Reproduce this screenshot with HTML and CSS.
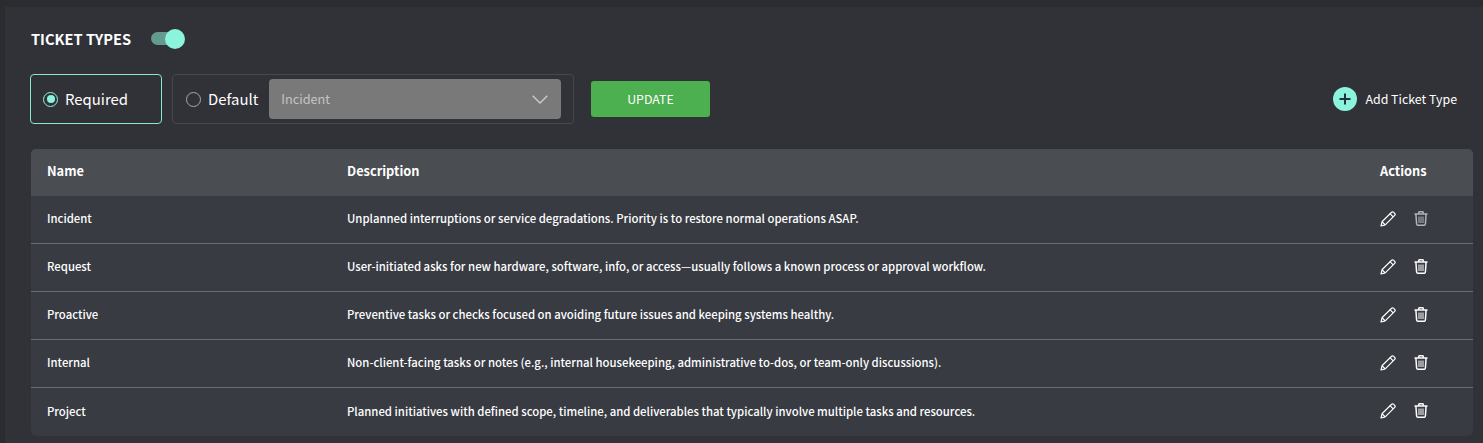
FILE: index.html
```html
<!DOCTYPE html>
<html lang="en">
<head>
<meta charset="utf-8">
<title>Ticket Types</title>
<link rel="stylesheet" href="styles.css">
</head>
<body>
<main class="card">
  <div class="title-row">
    <h2 class="title">TICKET TYPES</h2>
    <span class="switch"><span class="switch-knob"></span></span>
  </div>
  <div class="controls">
    <label class="option option-required">
      <span class="radio radio-on"><span class="radio-dot"></span></span>
      <span class="option-text">Required</span>
    </label>
    <div class="option option-default">
      <span class="radio"></span>
      <span class="option-text">Default</span>
      <div class="select">
        <span class="select-text">Incident</span>
        <svg class="chevron" width="16" height="9" viewBox="0 0 16 9"><path d="M0.7 0.7L8 8L15.3 0.7" fill="none" stroke="#c9cdd0" stroke-width="1.3"/></svg>
      </div>
    </div>
    <button class="update">UPDATE</button>
    <div class="add">
      <span class="add-icon"><svg width="12" height="12" viewBox="0 0 12 12"><path d="M6 0.5V11.5M0.5 6H11.5" stroke="#24303a" stroke-width="2"/></svg></span>
      <span>Add Ticket Type</span>
    </div>
  </div>
  <div class="table">
    <div class="row head">
      <div class="c-name">Name</div><div class="c-desc">Description</div><div class="c-act">Actions</div>
    </div>
    <div class="row">
      <div class="c-name">Incident</div>
      <div class="c-desc">Unplanned interruptions or service degradations. Priority is to restore normal operations ASAP.</div>
      <div class="c-act icons">
        <svg class="icon" width="16" height="16" viewBox="0 0 16 16"><use href="#pen"/></svg>
        <svg class="icon dim" width="14" height="15" viewBox="0 0 14 15"><use href="#bin"/></svg>
      </div>
    </div>
    <div class="row">
      <div class="c-name">Request</div>
      <div class="c-desc">User-initiated asks for new hardware, software, info, or access—usually follows a known process or approval workflow.</div>
      <div class="c-act icons">
        <svg class="icon" width="16" height="16" viewBox="0 0 16 16"><use href="#pen"/></svg>
        <svg class="icon" width="14" height="15" viewBox="0 0 14 15"><use href="#bin"/></svg>
      </div>
    </div>
    <div class="row">
      <div class="c-name">Proactive</div>
      <div class="c-desc">Preventive tasks or checks focused on avoiding future issues and keeping systems healthy.</div>
      <div class="c-act icons">
        <svg class="icon" width="16" height="16" viewBox="0 0 16 16"><use href="#pen"/></svg>
        <svg class="icon" width="14" height="15" viewBox="0 0 14 15"><use href="#bin"/></svg>
      </div>
    </div>
    <div class="row">
      <div class="c-name">Internal</div>
      <div class="c-desc">Non-client-facing tasks or notes (e.g., internal housekeeping, administrative to-dos, or team-only discussions).</div>
      <div class="c-act icons">
        <svg class="icon" width="16" height="16" viewBox="0 0 16 16"><use href="#pen"/></svg>
        <svg class="icon" width="14" height="15" viewBox="0 0 14 15"><use href="#bin"/></svg>
      </div>
    </div>
    <div class="row">
      <div class="c-name">Project</div>
      <div class="c-desc">Planned initiatives with defined scope, timeline, and deliverables that typically involve multiple tasks and resources.</div>
      <div class="c-act icons">
        <svg class="icon" width="16" height="16" viewBox="0 0 16 16"><use href="#pen"/></svg>
        <svg class="icon" width="14" height="15" viewBox="0 0 14 15"><use href="#bin"/></svg>
      </div>
    </div>
  </div>
</main>
<svg class="defs" width="0" height="0">
  <defs>
    <g id="pen" fill="none" stroke="currentColor" stroke-width="1.2" stroke-linejoin="round">
      <path d="M1 15L2 10.8L11.6 1.3C12.2 0.7 13.1 0.7 13.7 1.3L14.7 2.3C15.3 2.9 15.3 3.8 14.7 4.4L5.2 13.9Z"/>
      <path d="M10.2 2.8L13.2 5.8M2 10.8L5.2 13.9"/>
    </g>
    <g id="bin" fill="none" stroke="currentColor" stroke-width="1.5">
      <path d="M0.5 3H13.5" stroke-width="1.6"/>
      <path d="M4.7 2.8V1.7C4.7 1.1 5.1 0.7 5.7 0.7H8.3C8.9 0.7 9.3 1.1 9.3 1.7V2.8"/>
      <path d="M1.9 3L2.6 13C2.7 13.8 3.2 14.3 4 14.3H10C10.8 14.3 11.3 13.8 11.4 13L12.1 3"/>
      <path d="M5 5.5V12M7 5.5V12M9 5.5V12" stroke-width="1"/>
    </g>
  </defs>
</svg>
</body>
</html>
```

FILE: styles.css
```css
* { box-sizing: border-box; }
html, body { margin: 0; height: 100%; }
body {
  background: #2b2c30;
  color: #fff;
  font-family: "Noto Sans CJK SC", "Noto Sans", sans-serif;
  overflow: hidden;
  padding: 7px 0 0 5px;
}
.card {
  background: #313237;
  height: 436px;
  padding: 18px 10px 0 26px;
}
.title-row { display: flex; align-items: center; height: 28px; gap: 20px; }
.title { margin: 0; font-size: 14.6px; font-weight: 700; line-height: 28px; }
.switch {
  position: relative;
  display: block;
  width: 30px;
  height: 13px;
  border-radius: 7px;
  background: #639b8e;
  margin-top: -1px;
}
.switch-knob {
  position: absolute;
  right: -4px;
  top: -3px;
  width: 20px;
  height: 20px;
  border-radius: 50%;
  background: #8cf3dc;
}
.controls { display: flex; align-items: center; margin-top: 21px; height: 50px; }
.option {
  display: flex;
  align-items: center;
  height: 50px;
  border-radius: 4px;
  border: 1px solid #46484d;
  font-size: 14.9px;
}
.option-text { padding-bottom: 2px; }
.option-required { width: 132px; margin-left: -1px; padding-left: 12px; border-color: #86e8d2; }
.option-default { width: 402px; margin-left: 10px; padding-left: 13px; }
.radio {
  flex: none;
  width: 15px;
  height: 15px;
  border-radius: 50%;
  border: 1.5px solid #a8a9ab;
  margin-right: 7px;
  display: flex;
  align-items: center;
  justify-content: center;
}
.radio-on { border-color: #8cf3dc; }
.radio-dot { width: 8px; height: 8px; border-radius: 50%; background: #8cf3dc; }
.select {
  display: flex;
  align-items: center;
  justify-content: space-between;
  width: 292px;
  height: 40px;
  margin-left: 11px;
  padding: 0 13px 0 12px;
  background: #797979;
  border-radius: 4px;
  color: #c3c4c5;
  font-size: 12.7px;
}
.select-text { padding-bottom: 2px; }
.update {
  width: 119px;
  height: 36px;
  margin: 0 0 0 17px;
  border: 0;
  border-radius: 3px;
  background: #4caf50;
  color: #fff;
  font: 400 12.4px "Noto Sans CJK SC", "Noto Sans", sans-serif;
}
.add {
  display: flex;
  align-items: center;
  gap: 8px;
  margin-left: auto;
  padding-right: 16px;
  font-size: 12.4px;
  font-weight: 400;
}
.add-icon {
  width: 24px;
  height: 24px;
  border-radius: 50%;
  background: #8cf3dc;
  display: flex;
  align-items: center;
  justify-content: center;
}
.table { margin-top: 25px; border-radius: 5px; overflow: hidden; background: #383b42; }
.row {
  display: flex;
  align-items: center;
  height: 48px;
  padding: 0 0 3px 16px;
  font-size: 11.35px;
  font-weight: 500;
  border-bottom: 1px solid #6b6d70;
}
.row:last-child { border-bottom: 0; }
.row:last-child .icons { margin-top: 0; }
.head { height: 47px; padding-bottom: 5px; background: #4a4d52; font-size: 12.8px; font-weight: 700; border-bottom: 0; }
.c-name { width: 300px; flex: none; }
.c-desc { flex: 1; }
.c-act { width: 93px; flex: none; }
.icons { display: flex; align-items: center; gap: 18px; margin-top: 1px; }
.icon { color: #fff; display: block; }
.dim { color: #b1b5b7; }
.defs { position: absolute; }
```
